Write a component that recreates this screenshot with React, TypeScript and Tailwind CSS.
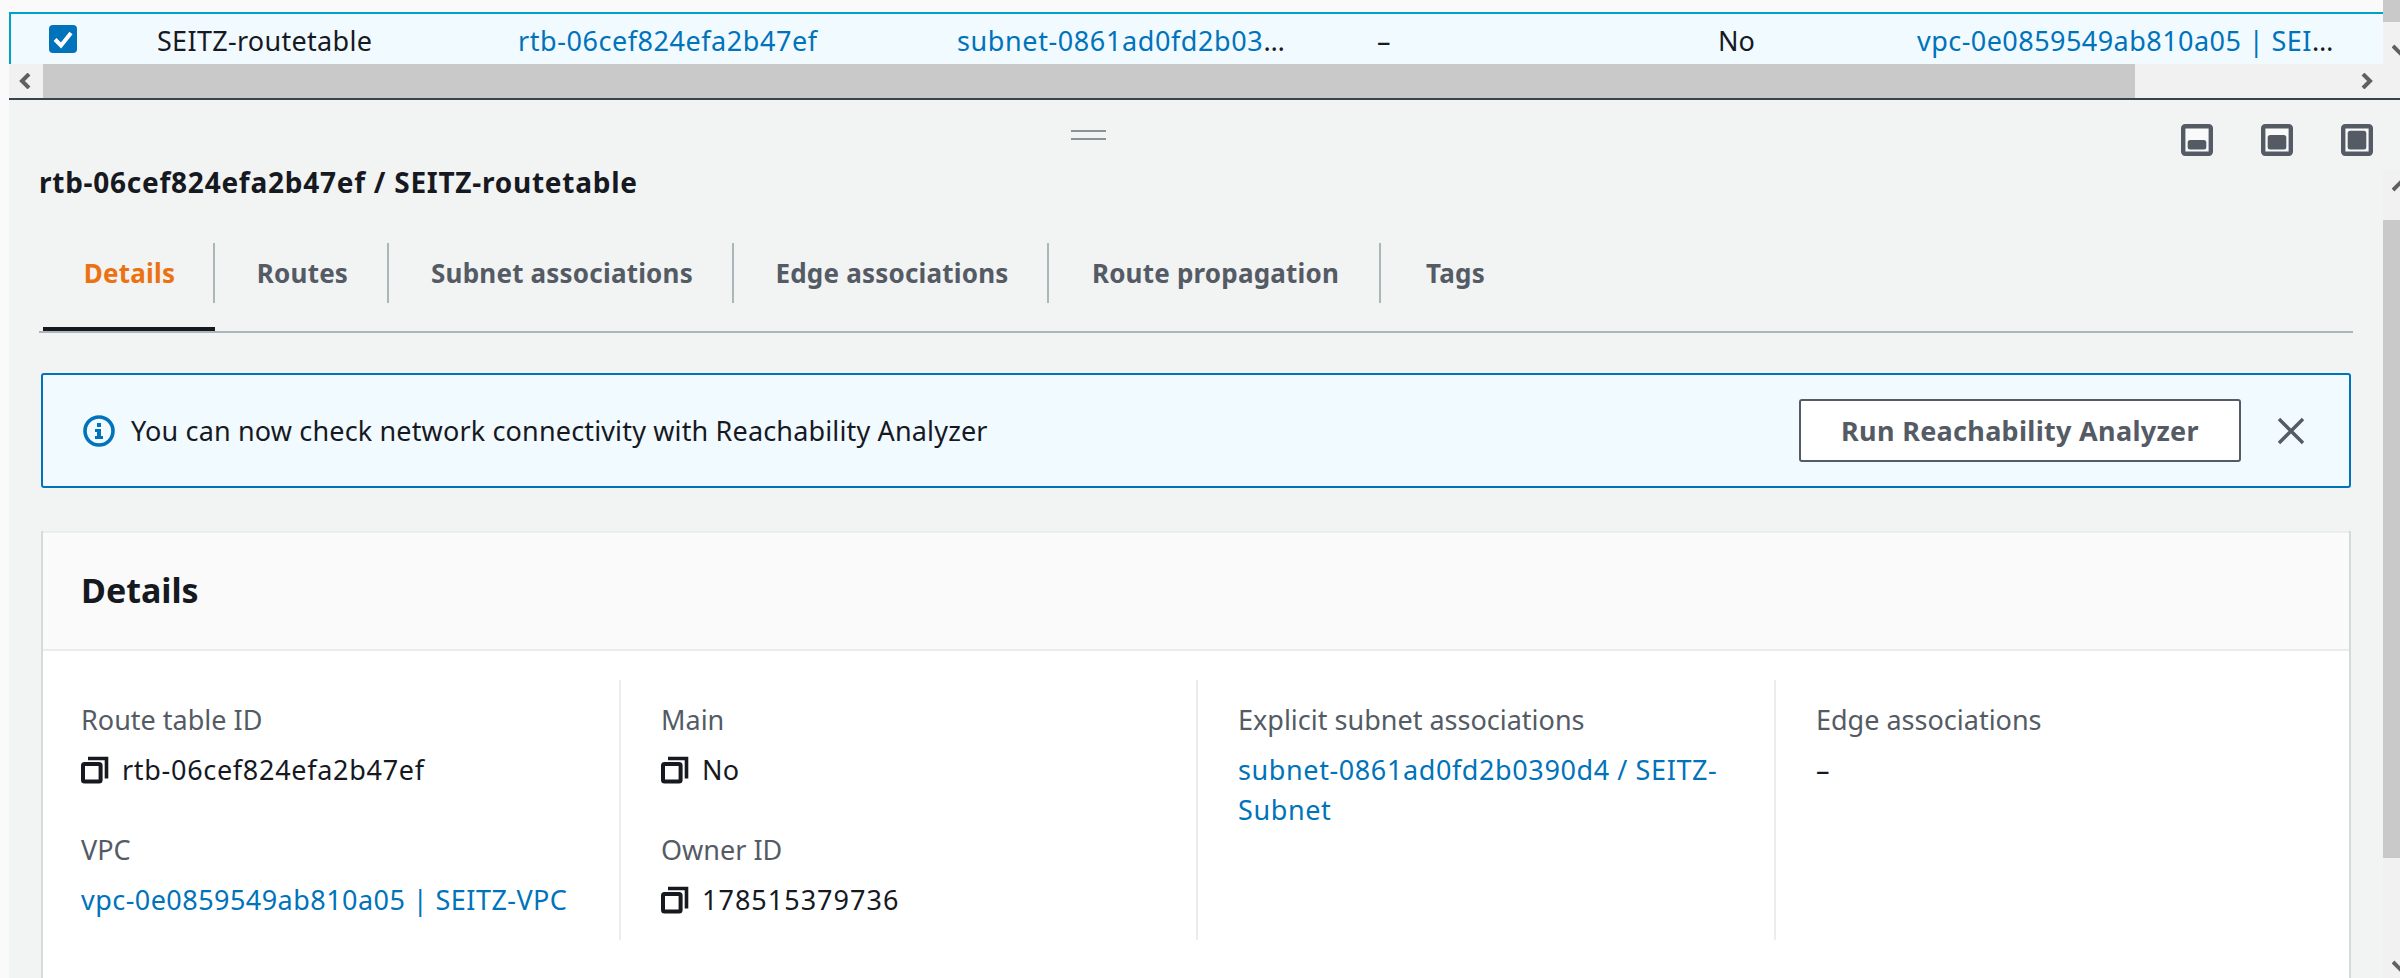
const Chevron = ({ d, className }: { d: string; className: string }) => (
  <svg viewBox="0 0 16 16" fill="none" className={className}>
    <path d={d} stroke="#606060" strokeWidth="4" />
  </svg>
);

const CopyIcon = () => (
  <svg viewBox="0 0 28 28" fill="none" className="w-[28px] h-[28px] flex-none">
    <rect x="2" y="8" width="17.6" height="17.6" rx="1.5" stroke="#16191f" strokeWidth="4" />
    <path d="M7 2.5h18.5V22.5" stroke="#16191f" strokeWidth="3.6" />
  </svg>
);

const InfoIcon = () => (
  <svg viewBox="0 0 32 32" fill="none" className="w-[32px] h-[32px] flex-none">
    <circle cx="16" cy="16" r="14" stroke="#0073bb" strokeWidth="3.6" />
    <path d="M14 8h4v4h-4zM12 14h6v7h2v3h-8v-3h2v-4h-2z" fill="#0073bb" />
  </svg>
);

const PanelIcon = ({ top }: { top: number }) => (
  <svg viewBox="0 0 32 32" fill="none" className="w-[32px] h-[32px] flex-none">
    <rect x="2.2" y="2.2" width="27.6" height="27.6" rx="2" fill="#f9fafa" stroke="#545b64" strokeWidth="4.4" />
    <rect x="6.7" y={top} width="18.6" height={25.4 - top} rx="2.5" fill="#545b64" />
  </svg>
);

const Tab = ({ label, width, active, last }: { label: string; width: string; active?: boolean; last?: boolean }) => (
  <div className={`flex-none h-[88px] flex flex-col ${width}`}>
    <div
      className={`h-[60px] flex items-center justify-center pl-[3px] text-[26px] font-bold tracking-[0.2px] ${
        last ? "" : "border-r-2 border-[#aab7b8]"
      } ${active ? "text-[#ec7211]" : "text-[#545b64]"}`}
    >
      {label}
    </div>
    <div className={`mt-auto h-[4px] ${active ? "bg-[#16191f]" : ""}`} />
  </div>
);

const Field = ({ label, children }: { label: string; children: React.ReactNode }) => (
  <div>
    <div className="text-[#545b64]">{label}</div>
    <div className="mt-[10px]">{children}</div>
  </div>
);

const Copyable = ({ value, tracking }: { value: string; tracking: string }) => (
  <div className="flex items-center gap-[13px] text-[#16191f]">
    <CopyIcon />
    <span className={tracking}>{value}</span>
  </div>
);

export default function App() {
  return (
    <div className="w-[2400px] h-[978px] overflow-hidden bg-[#fafafa] font-['Noto_Sans',sans-serif] text-[27px] leading-[40px]">
      {/* selected table row */}
      <div className="flex h-[64px] pl-[9px]">
        <div className="flex-1 mt-[12px] bg-[#f1faff] border-t-[2px] border-l-[2px] border-[#00a1c9] flex items-center text-[#16191f] whitespace-nowrap">
          <div className="w-[146px] flex-none pl-[38px]">
            <div className="w-[28px] h-[28px] rounded-[4px] bg-[#0073bb] flex items-center justify-center">
              <svg viewBox="0 0 28 28" fill="none" className="w-[28px] h-[28px]">
                <path d="M6 14.5l6 6L22 8" stroke="#fff" strokeWidth="4" />
              </svg>
            </div>
          </div>
          <div className="w-[361px] flex-none pt-[3px] tracking-[0.3px]">SEITZ-routetable</div>
          <div className="w-[439px] flex-none pt-[3px] text-[#0073bb] tracking-[0.55px]">rtb-06cef824efa2b47ef</div>
          <div className="w-[420px] flex-none pt-[3px] tracking-[0.6px]">
            <span className="text-[#0073bb]">subnet-0861ad0fd2b03</span>…
          </div>
          <div className="w-[341px] flex-none pt-[3px]">–</div>
          <div className="w-[199px] flex-none pt-[3px]">No</div>
          <div className="w-[418px] flex-none pt-[3px] tracking-[0.45px]">
            <span className="text-[#0073bb]">vpc-0e0859549ab810a05 | SEI</span>…
          </div>
        </div>
        <div className="w-[17px] flex-none bg-[#f1f1f1] overflow-hidden">
          <div className="h-[22px] bg-[#c9c9c9]" />
          <Chevron d="M1 4l7 7 7-7" className="w-[16px] h-[16px] ml-[9px] mt-[20px]" />
        </div>
      </div>

      {/* horizontal scrollbar */}
      <div className="ml-[9px] h-[36px] flex bg-[#f1f1f1] border-b-2 border-[#37444d]">
        <div className="w-[34px] flex-none flex items-center justify-center pr-[2px]">
          <Chevron d="M12 1L5 8l7 7" className="w-[16px] h-[16px]" />
        </div>
        <div className="w-[2092px] flex-none bg-[#c9c9c9]" />
        <div className="flex-1 flex items-center justify-end pr-[25px]">
          <Chevron d="M4 1l7 7-7 7" className="w-[16px] h-[16px]" />
        </div>
      </div>

      <div className="flex h-[878px] pl-[9px]">
        {/* split panel */}
        <div className="flex-1 min-w-0 bg-[#f2f3f3] px-[30px] overflow-hidden">
          <div className="h-[62px] flex">
            <div className="ml-[1032px] mt-[30px] w-[35px] h-[10px] border-y-2 border-[#879596]" />
            <div className="ml-auto mt-[24px] mr-[-20px] flex gap-[48px]">
              <PanelIcon top={16} />
              <PanelIcon top={11} />
              <PanelIcon top={6.7} />
            </div>
          </div>
          <div className="h-[40px] font-bold text-[28px] tracking-[0.75px] text-[#16191f] whitespace-nowrap">
            rtb-06cef824efa2b47ef / SEITZ-routetable
          </div>

          <div className="mt-[41px] flex pl-[4px] border-b-2 border-[#aab7b8]">
            <Tab label="Details" width="w-[172px]" active />
            <Tab label="Routes" width="w-[174px]" />
            <Tab label="Subnet associations" width="w-[345px]" />
            <Tab label="Edge associations" width="w-[315px]" />
            <Tab label="Route propagation" width="w-[332px]" />
            <Tab label="Tags" width="w-[146px]" last />
          </div>

          <div className="mt-[40px] mx-[2px] h-[115px] flex items-center bg-[#f1faff] border-2 border-[#0073bb] rounded-[3px] pl-[40px] pr-[43px]">
            <InfoIcon />
            <span className="ml-[16px] text-[#16191f] tracking-[0.15px] whitespace-nowrap">
              You can now check network connectivity with Reachability Analyzer
            </span>
            <button className="ml-auto w-[442px] h-[63px] flex items-center justify-center bg-white border-2 border-[#545b64] rounded-[3px] font-bold tracking-[0.3px] text-[#545b64]">
              Run Reachability Analyzer
            </button>
            <svg viewBox="0 0 30 30" fill="none" className="ml-[35px] w-[30px] h-[30px] flex-none">
              <path d="M3 3l24 24M27 3L3 27" stroke="#545b64" strokeWidth="3.4" />
            </svg>
          </div>

          <div className="mt-[43px] mx-[2px] bg-white border-x-2 border-[#d5dbdb] h-[600px]">
            <div className="h-[120px] bg-[#fafafa] border-t-2 border-b-2 border-t-[#eaeded] border-b-[#eaeded] pl-[38px] pb-[2px] flex items-center font-bold text-[34px] text-[#16191f]">
              Details
            </div>
            <div className="flex pt-[29px]">
              <div className="w-[578px] flex-none h-[260px] pt-[20px] pl-[38px] border-r-2 border-[#eaeded] flex flex-col gap-[40px]">
                <Field label="Route table ID">
                  <Copyable value="rtb-06cef824efa2b47ef" tracking="tracking-[0.7px]" />
                </Field>
                <Field label="VPC">
                  <span className="text-[#0073bb] tracking-[0.45px]">vpc-0e0859549ab810a05 | SEITZ-VPC</span>
                </Field>
              </div>
              <div className="w-[577px] flex-none h-[260px] pt-[20px] pl-[40px] border-r-2 border-[#eaeded] flex flex-col gap-[40px]">
                <Field label="Main">
                  <Copyable value="No" tracking="tracking-[0.3px]" />
                </Field>
                <Field label="Owner ID">
                  <Copyable value="178515379736" tracking="tracking-[1px]" />
                </Field>
              </div>
              <div className="w-[578px] flex-none h-[260px] pt-[20px] pl-[40px] pr-[40px] border-r-2 border-[#eaeded]">
                <Field label="Explicit subnet associations">
                  <span className="text-[#0073bb] tracking-[0.6px]">subnet-0861ad0fd2b0390d4 / SEITZ-Subnet</span>
                </Field>
              </div>
              <div className="flex-1 h-[260px] pt-[20px] pl-[40px]">
                <Field label="Edge associations">
                  <span className="text-[#16191f]">–</span>
                </Field>
              </div>
            </div>
          </div>
        </div>

        {/* panel scrollbar */}
        <div className="w-[17px] flex-none flex flex-col bg-[#f2f3f3] overflow-hidden">
          <div className="mt-[70px] h-[50px] bg-[#f1f1f1] pt-[8px]">
            <Chevron d="M1 12l7-7 7 7" className="w-[16px] h-[16px] ml-[9px]" />
          </div>
          <div className="h-[638px] bg-[#c9c9c9]" />
          <div className="flex-1 bg-[#f1f1f1] flex flex-col justify-end pb-[4px]">
            <Chevron d="M1 4l7 7 7-7" className="w-[16px] h-[16px] ml-[9px]" />
          </div>
        </div>
      </div>
    </div>
  );
}
